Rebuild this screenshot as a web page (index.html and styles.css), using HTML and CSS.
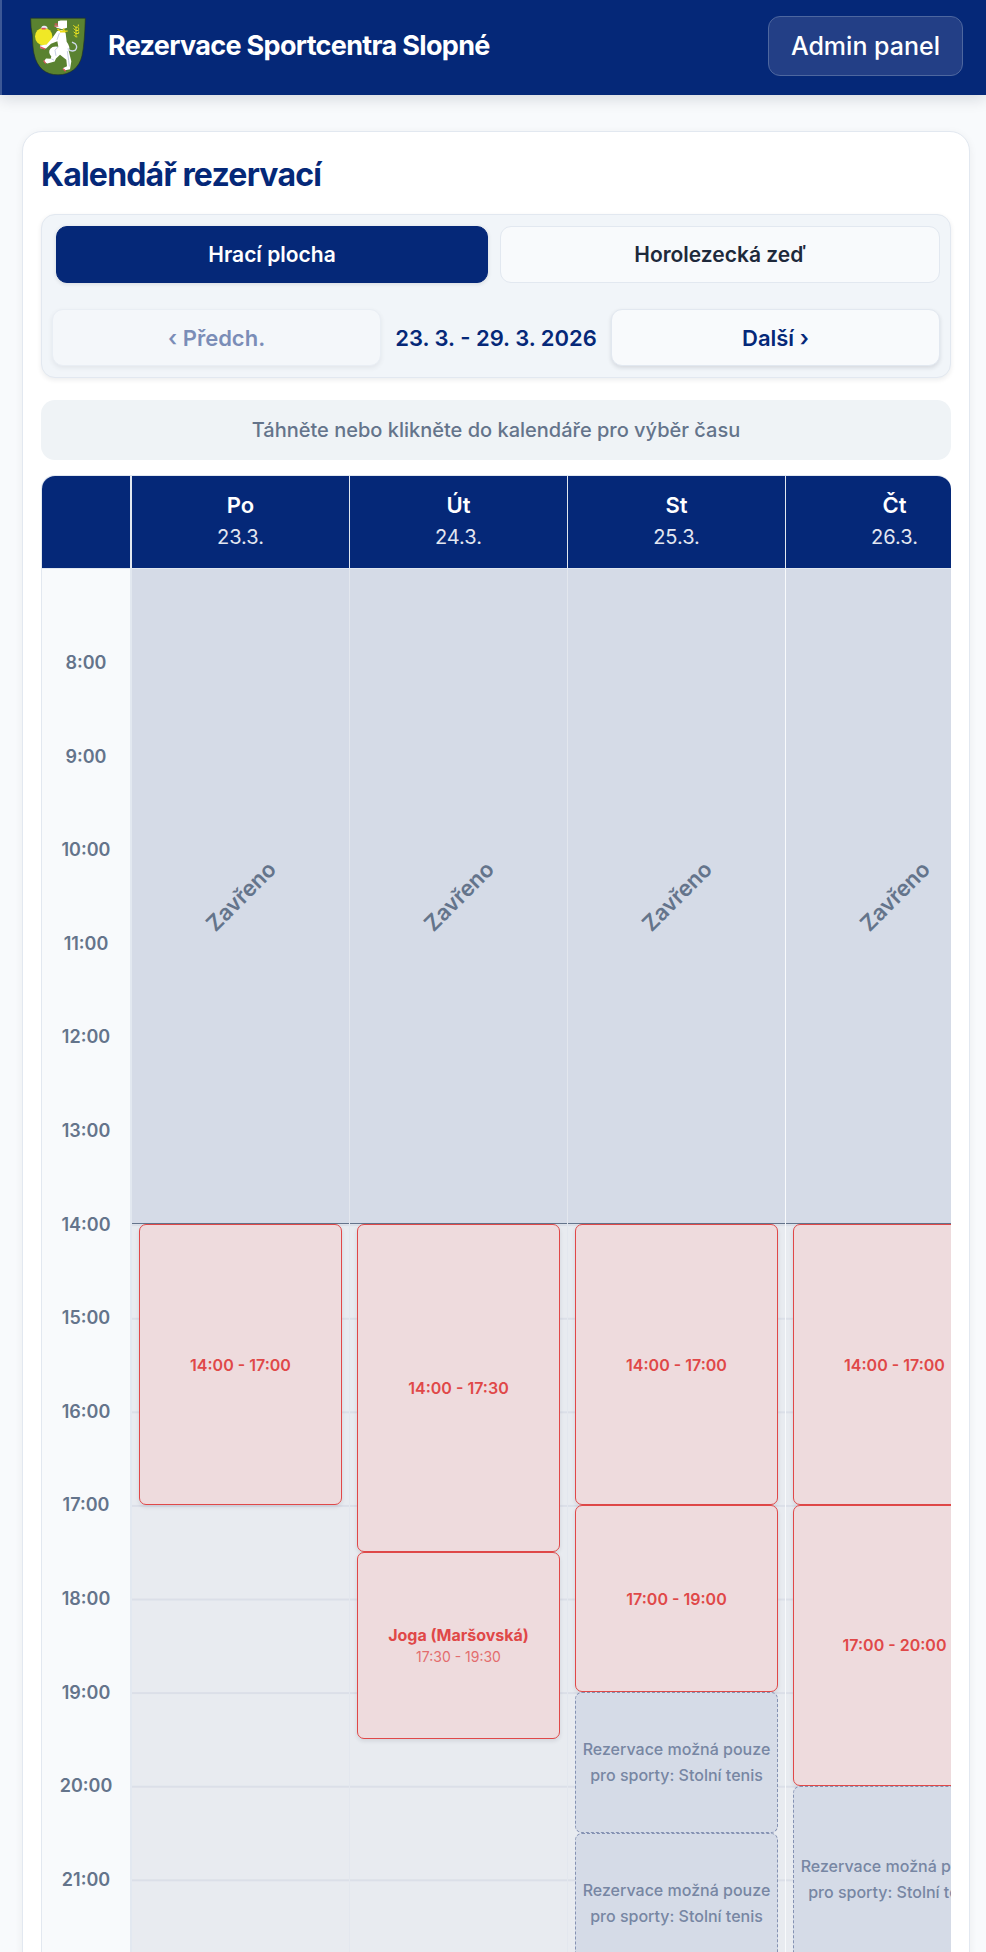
FILE: index.html
```html
<!DOCTYPE html>
<html lang="cs">
<head>
    <meta charset="utf-8">
    <meta name="viewport" content="width=device-width, initial-scale=1">
    <title>Rezervace Sportcentra Slopné</title>
    <link rel="stylesheet" href="styles.css">
</head>
<body>
    <header class="header">
        <svg class="logo" viewBox="90 50 168 176" aria-hidden="true">
            <path d="M92 53H256Q254 128 246 166C238 201 212 223 174 223C136 223 111 202 102 160Q98 142 97 104Q92 82 92 53Z" fill="#5a8230" stroke="#24351f" stroke-width="2"/>
            <circle cx="131" cy="108" r="26" fill="#f0e826"/>
            <path d="M123 83Q126 74 133 76Q140 74 144 84Z" fill="#e8ecf6"/>
            <path d="M125 82h12v5h-12z" fill="#e05060"/>
            <path d="M174 62l8-2h19v22l-14 4-17-4-7-6h11v-8z" fill="#fff"/>
            <path d="M164 69h9v4h-9zM163 76h12v3h-12z" fill="#e05060"/>
            <path d="M171 92Q188 82 197 98L200 124Q212 140 206 151L214 182L210 206L196 209L188 203L201 197L199 178L180 163L168 174L164 183L142 189L131 184L138 174L152 175L154 168Q143 156 151 145Q158 136 175 139L172 122L153 130L138 144L121 143L120 135L140 132L158 111Z" fill="#fff"/>
            <path d="M175 139l-10 10 3 17M202 152l4 28 2 18M178 98l-7 20M154 175l8 4" fill="none" stroke="#c6cfe4" stroke-width="3"/>
            <path d="M203 144Q213 156 226 149Q234 139 226 130L216 125" fill="none" stroke="#cfd8ea" stroke-width="4"/>
            <path d="M172 86l9 5 22 1M180 94h17M190 84l5 11" stroke="#f0dc18" stroke-width="4" fill="none"/>
            <path d="M120 139l15 7M131 180l6 9M189 205l8 7" stroke="#e05060" stroke-width="4"/>
            <path d="M220 74l6 6h10M221 84l6 6h9M221 94l6 5h9M222 104l5 5h5M235 72v5M236 83v5M236 93v5M228 79v27" stroke="#e8e020" stroke-width="3" fill="none"/>
        </svg>
        <h1 class="site-title">Rezervace Sportcentra Slopné</h1>
        <button type="button" class="admin">Admin panel</button>
    </header>

    <main class="card">
        <h2 class="card-title">Kalendář rezervací</h2>

        <div class="toolbar">
            <div class="tabs">
                <button type="button" class="btn tab active">Hrací plocha</button>
                <button type="button" class="btn tab">Horolezecká zeď</button>
            </div>
            <div class="week">
                <button type="button" class="btn nav" disabled>‹ Předch.</button>
                <span class="range">23. 3. - 29. 3. 2026</span>
                <button type="button" class="btn nav">Další ›</button>
            </div>
        </div>

        <p class="hint">Táhněte nebo klikněte do kalendáře pro výběr času</p>

        <div class="scroller">
            <div class="calendar">
                <div class="head corner"></div>
                <div class="head"><strong>Po</strong><span>23.3.</span></div>
                <div class="head"><strong>Út</strong><span>24.3.</span></div>
                <div class="head"><strong>St</strong><span>25.3.</span></div>
                <div class="head"><strong>Čt</strong><span>26.3.</span></div>

                <div class="times">
                    <span>8:00</span>
                    <span>9:00</span>
                    <span>10:00</span>
                    <span>11:00</span>
                    <span>12:00</span>
                    <span>13:00</span>
                    <span>14:00</span>
                    <span>15:00</span>
                    <span>16:00</span>
                    <span>17:00</span>
                    <span>18:00</span>
                    <span>19:00</span>
                    <span>20:00</span>
                    <span>21:00</span>
                </div>

                <!-- one grid row = half an hour, from 7:00 -->
                <div class="day">
                    <div class="closed"><span>Zavřeno</span></div>
                    <div class="event long-6">14:00 - 17:00</div>
                </div>
                <div class="day">
                    <div class="closed"><span>Zavřeno</span></div>
                    <div class="event long-7">14:00 - 17:30</div>
                    <div class="event long-4"><strong>Joga (Maršovská)</strong><small>17:30 - 19:30</small></div>
                </div>
                <div class="day light">
                    <div class="closed"><span>Zavřeno</span></div>
                    <div class="event long-6">14:00 - 17:00</div>
                    <div class="event long-4">17:00 - 19:00</div>
                    <div class="event limited long-3">Rezervace možná pouze pro sporty: Stolní tenis</div>
                    <div class="event limited long-3">Rezervace možná pouze pro sporty: Stolní tenis</div>
                </div>
                <div class="day">
                    <div class="closed"><span>Zavřeno</span></div>
                    <div class="event long-6">14:00 - 17:00</div>
                    <div class="event long-6">17:00 - 20:00</div>
                    <div class="event limited long-4">Rezervace možná pouze pro sporty: Stolní tenis</div>
                </div>
            </div>
        </div>
    </main>
</body>
</html>
```

FILE: styles.css
```css
* {
    box-sizing: border-box;
}

html {
    height: 100%;
    overflow: hidden;
}

body {
    height: 100%;
    margin: 0;
    overflow: hidden;
    background: #f8fafc;
    color: #1e293b;
    font-family: Inter, "Liberation Sans", sans-serif;
}

button {
    font-family: inherit;
    cursor: pointer;
}

.header {
    display: flex;
    align-items: center;
    gap: 22px;
    height: 95px;
    padding: 0 23px 3px 28px;
    border-left: 2px solid #3c5896;
    background: #052878;
    box-shadow: 0 4px 14px rgba(15, 23, 42, 0.14);
}

.logo {
    width: 56px;
    height: 59px;
    flex: none;
}

.site-title {
    flex: 1;
    margin: 0;
    color: #fff;
    font-size: 27px;
    font-weight: 700;
    letter-spacing: -0.025em;
    line-height: 40px;
}

.admin {
    height: 60px;
    padding: 0 22px;
    border: 1px solid #4e679f;
    border-radius: 12px;
    background: #233f86;
    color: #fff;
    font-size: 25px;
    font-weight: 500;
}

.card {
    margin: 36px 16px 0 22px;
    padding: 18px;
    border: 1px solid #e2e8f0;
    border-radius: 20px;
    background: #fff;
    box-shadow: 0 2px 8px rgba(15, 23, 42, 0.06);
}

.card-title {
    margin: 0 0 14px;
    color: #052878;
    font-size: 32px;
    font-weight: 700;
    letter-spacing: -0.025em;
    line-height: 50px;
}

.toolbar {
    display: grid;
    gap: 26px;
    padding: 11px 10px;
    border: 1px solid #e2e8f0;
    border-radius: 14px;
    background: #f1f5f9;
    box-shadow: 0 2px 5px rgba(15, 23, 42, 0.08);
}

.tabs {
    display: grid;
    grid-template-columns: 1fr 1fr;
    gap: 8px;
}

.week {
    display: grid;
    grid-template-columns: 1fr auto 1fr;
    align-items: center;
}

.btn {
    height: 57px;
    padding: 0 12px;
    border: 1px solid #e2e8f0;
    border-radius: 11px;
    background: #f8fafc;
    color: #1e293b;
    font-size: 21px;
    font-weight: 600;
}

.tab.active {
    margin: 0 4px;
    border-color: #052878;
    background: #052878;
    color: #fff;
    box-shadow: 0 1px 4px rgba(15, 23, 42, 0.12);
}

.nav {
    color: #052878;
    font-size: 22px;
    box-shadow: 0 2px 4px rgba(15, 23, 42, 0.12);
}

.nav:disabled {
    opacity: 0.5;
    cursor: default;
}

.range {
    padding: 0 14px;
    color: #052878;
    font-size: 22px;
    font-weight: 600;
}

.hint {
    margin: 22px 0 15px;
    border-radius: 14px;
    background: #eff3f6;
    color: #64748b;
    font-size: 20px;
    font-weight: 500;
    line-height: 60px;
    text-align: center;
}

.scroller {
    overflow: hidden;
    border: 1px solid #e2e8f0;
    border-right: 0;
    border-radius: 14px 14px 0 0;
}

.calendar {
    display: grid;
    grid-template-columns: 90px repeat(4, 1fr);
    grid-template-rows: 93px 1404px;
    width: 962px;
}

.head {
    display: flex;
    flex-direction: column;
    align-items: center;
    justify-content: center;
    padding-bottom: 2px;
    border-right: 1px solid #e2e8f0;
    border-bottom: 1px solid #e2e8f0;
    background: #052878;
    color: #fff;
    font-size: 20px;
    line-height: 32px;
}

.head strong {
    font-size: 22px;
    font-weight: 600;
}

.head span {
    color: #e2e6f0;
}

.corner,
.times {
    border-right: 2px solid #e2e8f0;
}

.times,
.day {
    display: grid;
    grid-template-rows: repeat(30, 1fr);
}

.times {
    background: #f8fafc;
    color: #64748b;
    font-size: 18px;
    font-weight: 600;
}

.times span {
    grid-row: span 2;
    place-self: center;
}

.times span:first-child {
    grid-row: 2 / 4;
}

.day {
    border-right: 1px solid #e3e7ee;
    background: #e8ebf0 linear-gradient(#dbdfe8 2px, transparent 2px) 0 0 / 100% calc(100% / 15);
}

.light {
    border-right-color: #f8fafc;
}

.closed {
    display: flex;
    grid-row: span 14;
    align-items: center;
    justify-content: center;
    border-bottom: 1px solid #64748b;
    background: #d5dbe7;
    color: #64748b;
    font-size: 22px;
    font-weight: 600;
}

.closed span {
    transform: rotate(-45deg);
}

.event {
    display: flex;
    flex-direction: column;
    align-items: center;
    justify-content: center;
    min-height: 0;
    margin: 0 7px;
    border: 1px solid #e04848;
    border-radius: 7px;
    background: #eedbdd;
    color: #e04848;
    font-size: 16px;
    font-weight: 600;
    text-align: center;
    box-shadow: 0 2px 4px rgba(15, 23, 42, 0.1);
}

.event strong {
    font-weight: 700;
    line-height: 24px;
}

.event small {
    font-size: 14px;
    font-weight: 400;
    line-height: 20px;
    opacity: 0.75;
}

.limited {
    border: 1px dashed #8592b3;
    background: #d5dbe7;
    color: #7786a3;
    font-weight: 500;
    line-height: 26px;
    box-shadow: none;
}

.long-3 {
    grid-row: span 3;
}

.long-4 {
    grid-row: span 4;
}

.long-6 {
    grid-row: span 6;
}

.long-7 {
    grid-row: span 7;
}
```
